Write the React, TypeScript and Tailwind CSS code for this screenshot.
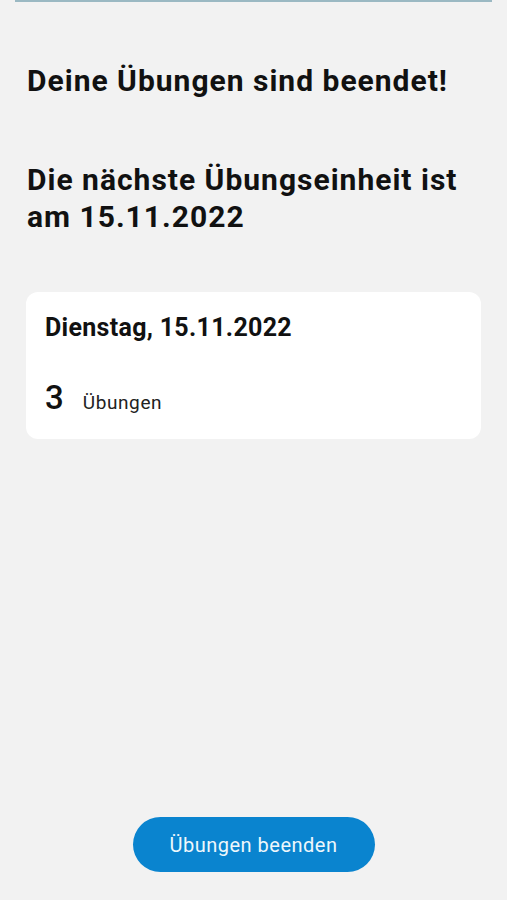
export default function App() {
  return (
    <div
      className="w-[507px] h-[900px] bg-[#f2f2f2] flex flex-col"
      style={{ fontFamily: 'Roboto, "Noto Sans", sans-serif' }}
    >
      <div className="mx-[15px] h-[2px] bg-[#9bb9c3]" />
      <div className="px-[27px] pt-[60px]">
        <h1 className="text-[30px] leading-[37px] font-bold tracking-[1px] text-[#111]">
          Deine Übungen sind beendet!
        </h1>
        <h2 className="mt-[62px] text-[30px] leading-[37px] font-bold tracking-[1px] text-[#111]">
          Die nächste Übungseinheit ist
          <br />
          am 15.11.2022
        </h2>
      </div>
      <div className="mx-[26px] mt-[57px] h-[147px] bg-white rounded-[12px] px-[19px] pt-[20px]">
        <div className="text-[25px] leading-[32px] font-bold tracking-[0.3px] text-[#111]">
          Dienstag, 15.11.2022
        </div>
        <div className="mt-[34px] flex items-baseline gap-[19px]">
          <span className="text-[33px] leading-[40px] font-medium text-[#111]">3</span>
          <span className="text-[19px] tracking-[0.6px] text-[#222]">Übungen</span>
        </div>
      </div>
      <div className="flex-1" />
      <div className="flex justify-center pb-[28px]">
        <button className="w-[242px] h-[55px] rounded-full bg-[#0a84cf] text-[#eef7fc] text-[20px] tracking-[0.5px]">
          Übungen beenden
        </button>
      </div>
    </div>
  );
}
